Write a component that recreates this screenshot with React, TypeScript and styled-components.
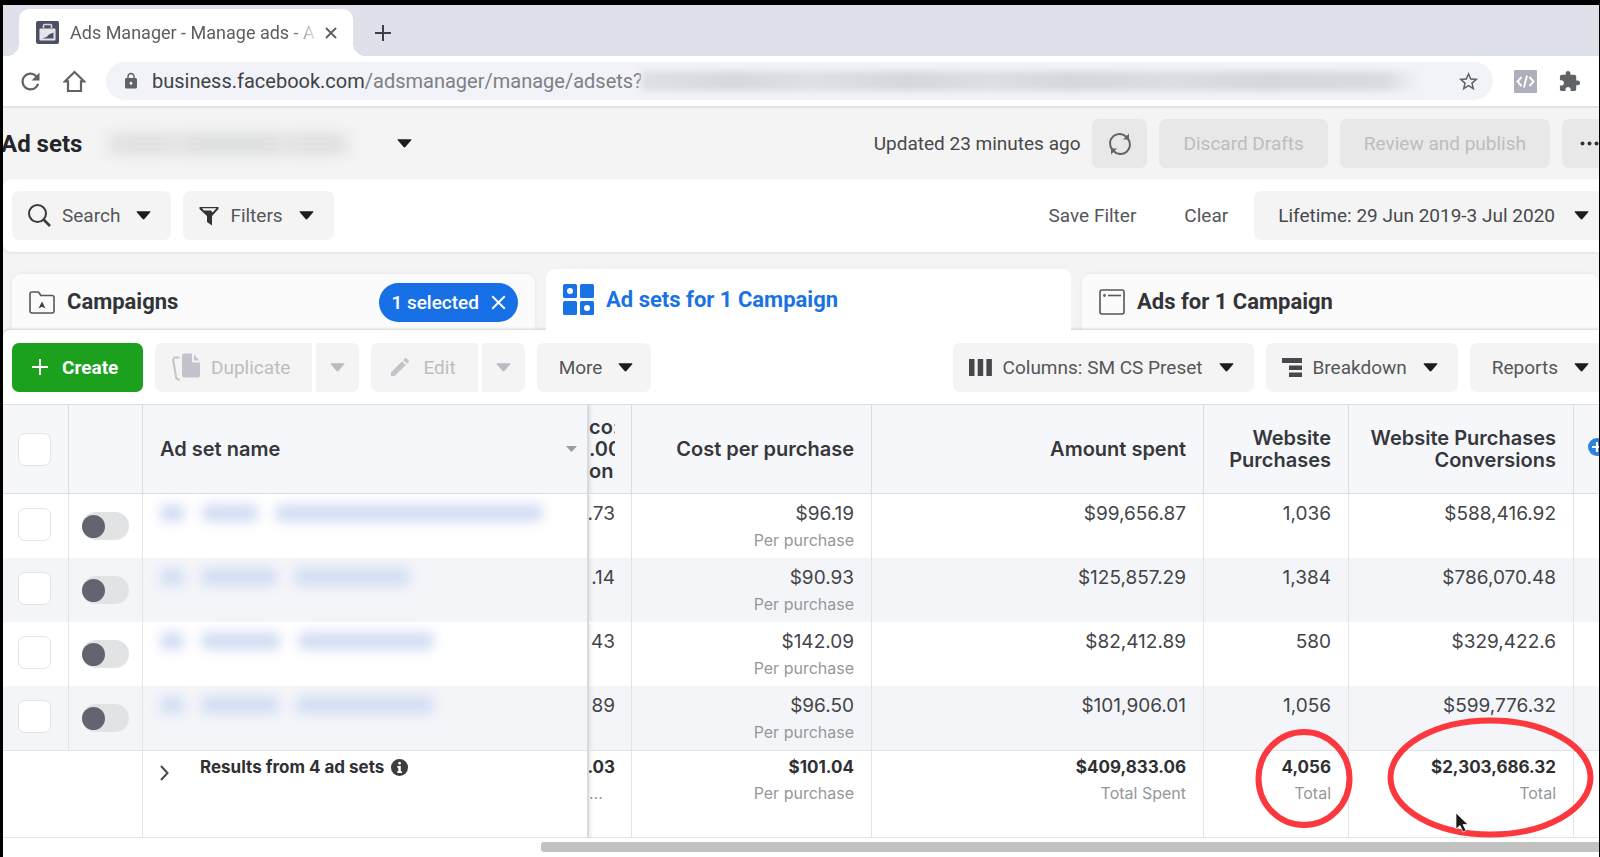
import React, { useState } from 'react';
import styled, { createGlobalStyle, css } from 'styled-components';
import { MdLock, MdStarBorder, MdExtension, MdRefresh, MdEdit } from 'react-icons/md';

const Global = createGlobalStyle`
  *, *::before, *::after { box-sizing: border-box; }
  body { margin: 0; background: #000; font-family: Roboto, "Liberation Sans", sans-serif; font-size: 19px; color: #4a4b4f; }
  button, input { font: inherit; color: inherit; margin: 0; }
  button { cursor: pointer; }
`;

const Page = styled.div`
  display: flex;
  flex-direction: column;
  min-height: 100vh;
  overflow: hidden;
  background: #f4f4f4;
  border: solid #000;
  border-width: 5px 1px 0 3px;
`;

/* Browser chrome */
const TabStrip = styled.div`
  display: flex;
  align-items: flex-end;
  height: 51px;
  padding-left: 16px;
  background: #dee1e9;
`;
const BrowserTab = styled.div`
  position: relative;
  display: flex;
  align-items: center;
  gap: 11px;
  width: 334px;
  height: 47px;
  padding: 0 16px 0 17px;
  background: #fff;
  border-radius: 10px 10px 0 0;
  &::before, &::after {
    content: '';
    position: absolute;
    bottom: 0;
    width: 12px;
    height: 12px;
  }
  &::before { left: -12px; background: radial-gradient(circle at 0 0, transparent 12px, #fff 12px); }
  &::after { right: -12px; background: radial-gradient(circle at 100% 0, transparent 12px, #fff 12px); }
`;
const TabTitle = styled.span`
  flex: 1;
  overflow: hidden;
  white-space: nowrap;
  font-size: 18px;
  line-height: 24px;
  color: #5c5e62;
  mask-image: linear-gradient(90deg, #000 220px, transparent 250px);
`;
const PlainButton = styled.button`
  display: flex;
  padding: 0;
  border: 0;
  background: none;
  color: #5f6368;
`;
const NewTab = styled(PlainButton)`
  align-items: center;
  height: 46px;
  margin-left: 22px;
  color: #3c3f43;
`;
const UrlRow = styled.div`
  display: flex;
  align-items: center;
  height: 52px;
  padding-left: 14px;
  background: #fff;
  border-bottom: 2px solid #e2e3e5;
`;
const HomeButton = styled(PlainButton)`
  margin: 0 20px 0 19px;
`;
const AddressBar = styled.label`
  display: flex;
  flex: 1;
  align-items: center;
  height: 38px;
  padding: 0 13px 0 16px;
  border-radius: 19px;
  background: #f2f3f8;
  font-size: 20px;
  color: #404347;
`;
const Domain = styled.span`
  margin-left: 12px;
`;
const PathInput = styled.input`
  width: 276px;
  padding: 0;
  border: 0;
  outline: 0;
  background: none;
  color: #7d7f84;
`;
const HiddenQuery = styled.span`
  flex: 1;
  height: 20px;
  margin-right: 36px;
  background: linear-gradient(90deg, #dfe0e4, #d6d8dc 12%, #dfe0e4 22%, #d5d7db 34%, #dcdee2 45%, #d5d7db 55%, #dcdde1 68%, #d5d7db 80%, #d9dbdf 95%, #f2f3f8);
  filter: blur(3px);
`;
const Extensions = styled.div`
  display: flex;
  align-items: center;
  gap: 21px;
  padding: 0 18px 0 21px;
`;

/* Shared controls */
type BtnProps = { $muted?: boolean; $tone?: 'light' | 'grey'; $edge?: boolean };
const Button = styled.button<BtnProps>`
  display: flex;
  flex: none;
  align-items: center;
  gap: 11px;
  height: 49px;
  padding: 0 20px 0 16px;
  border: 0;
  border-radius: 7px;
  background: ${p => (p.$tone === 'grey' ? '#e8e8e8' : '#f4f4f4')};
  color: ${p => (p.$muted ? '#bcbdc1' : '#55565a')};
  white-space: nowrap;
  ${p => p.$edge && css`
    padding-left: 22px;
    padding-right: 10px;
    border-radius: 7px 0 0 7px;
  `}
`;
const TextButton = styled(Button)`
  padding: 0 24px;
`;
const MoreButton = styled(Button)`
  padding: 0 18px 0 22px;
`;
const DateButton = styled(Button)`
  gap: 14px;
  padding-left: 24px;
  color: #47484c;
`;
const IconButton = styled(Button)`
  width: 55px;
  padding: 0;
  justify-content: center;
`;
const OverflowButton = styled(Button)`
  width: 37px;
  padding: 0 0 0 18px;
  border-radius: 7px 0 0 7px;
`;
const LinkButton = styled(Button)`
  background: none;
  padding: 0 22px;
`;
const CreateButton = styled(Button)`
  gap: 14px;
  width: 131px;
  padding: 0 0 0 20px;
  background: #1ba11d;
  color: #fff;
  font-weight: 700;
`;
const SplitGroup = styled.div`
  display: flex;
  gap: 4px;
`;
const SplitMain = styled(Button)`
  padding: 0 22px 0 17px;
  border-radius: 7px 0 0 7px;
`;
const SplitCaret = styled(Button)`
  width: 43px;
  padding: 0;
  justify-content: center;
  border-radius: 0 7px 7px 0;
`;
const CaretSvg = styled.svg<{ $muted?: boolean }>`
  flex: none;
  margin-left: 5px;
  color: ${p => (p.$muted ? '#b9bac2' : '#1c1c1e')};
  ${SplitCaret} & { margin-left: 0; }
`;

/* Account header */
const Header = styled.header`
  display: flex;
  align-items: center;
  gap: 12px;
  height: 71px;
`;
const Title = styled.h1`
  margin: 0 0 0 -2px;
  font-size: 24px;
  line-height: 32px;
  font-weight: 700;
  color: #25262a;
`;
const HiddenAccount = styled.span`
  width: 240px;
  height: 22px;
  margin: 0 32px 0 14px;
  border-radius: 8px;
  background: linear-gradient(90deg, #dfe0e1 0 24%, #e4e4e5 28%, #dddedf 36% 66%, #e3e3e4 74%, #dedfe0 82%);
  filter: blur(7px);
`;
const Updated = styled.span`
  margin-left: auto;
  color: #47484c;
`;

const FilterBar = styled.section`
  display: flex;
  align-items: center;
  gap: 12px;
  height: 73px;
  padding-left: 9px;
  background: #fff;
  border-radius: 8px 0 0 8px;
  box-shadow: 0 1px 3px rgba(0, 0, 0, 0.1);
`;
const RightGroup = styled.div<{ $gap?: number }>`
  display: flex;
  gap: ${p => p.$gap ?? 12}px;
  margin-left: auto;
`;

/* Level tabs */
const LevelTabs = styled.nav`
  display: grid;
  grid-template-columns: 523fr 525fr 517fr;
  align-items: end;
  gap: 11px;
  height: 78px;
  padding-left: 9px;
`;
const LevelTab = styled.div<{ $active?: boolean }>`
  position: relative;
  z-index: ${p => (p.$active ? 2 : 0)};
  display: flex;
  align-items: center;
  gap: 12px;
  height: ${p => (p.$active ? 61 : 56)}px;
  padding: 0 17px;
  border-radius: 9px 9px 0 0;
  background: ${p => (p.$active ? '#fff' : '#fbfbfb')};
  box-shadow: 0 0 5px rgba(0, 0, 0, ${p => (p.$active ? 0 : 0.06)});
`;
const LevelLink = styled.a<{ $active?: boolean }>`
  font-size: 22px;
  line-height: 28px;
  font-weight: 700;
  text-decoration: none;
  color: ${p => (p.$active ? '#1a73e3' : '#333438')};
`;
const SelectedPill = styled.button`
  display: flex;
  align-items: center;
  gap: 12px;
  height: 39px;
  margin-left: auto;
  padding: 0 12px;
  border: 0;
  border-radius: 20px;
  background: #1770e6;
  color: #fff;
  font-weight: 500;
`;

const Toolbar = styled.section`
  position: relative;
  z-index: 1;
  display: flex;
  align-items: center;
  gap: 12px;
  height: 74px;
  padding-left: 9px;
  background: #fff;
  border-radius: 7px 0 0 0;
  box-shadow: 0 -1px 3px rgba(0, 0, 0, 0.16);
`;

/* Data table */
const TableArea = styled.main`
  position: relative;
  z-index: 1;
  flex: 1;
  background: #fff;
  font-family: Inter, "Liberation Sans", sans-serif;
`;
const Table = styled.table`
  width: 100%;
  table-layout: fixed;
  border-collapse: separate;
  border-spacing: 0;
`;
const stickyEdge = css`
  position: relative;
  border-right: 2px solid #d9dade;
  box-shadow: 2px 0 3px rgba(0, 0, 0, 0.08);
  clip-path: inset(0 -6px 0 0);
  text-align: left;
`;
const Th = styled.th`
  height: 90px;
  padding: 0 17px;
  border: solid #dcdde1;
  border-width: 1px 1px 1px 0;
  background: #f6f7fb;
  font-size: 20px;
  line-height: 22px;
  font-weight: 600;
  text-align: right;
  color: #36373b;
  &:last-child { border-right: 0; }
`;
const CheckTh = styled(Th)`
  padding: 0 3px 0 0;
`;
const StickyTh = styled(Th)`
  ${stickyEdge}
`;
const HeadName = styled.div`
  display: flex;
  align-items: center;
  justify-content: space-between;
  margin-right: -7px;
`;
const Row = styled.tr<{ $striped?: boolean }>`
  background: ${p => (p.$striped ? '#f4f5f9' : '#fff')};
`;
const Td = styled.td`
  height: 64px;
  padding: 8px 17px 0;
  border-right: 1px solid #e3e4e7;
  vertical-align: top;
  text-align: right;
  white-space: nowrap;
  &:last-child { border-right: 0; }
`;
const ControlTd = styled(Td)`
  padding: 0 3px 3px 0;
  vertical-align: middle;
  text-align: center;
`;
const ToggleTd = styled(ControlTd)`
  padding: 0 0 1px;
`;
const StickyTd = styled(Td)`
  ${stickyEdge}
`;
const FootTd = styled(Td)`
  height: 88px;
  padding-top: 4px;
  border-top: 1px solid #e3e4e7;
  border-bottom: 1px solid #e3e4e7;
`;
const StickyFootTd = styled(FootTd)`
  ${stickyEdge}
`;
const Clip = styled.div<{ $end?: boolean }>`
  display: flex;
  justify-content: ${p => (p.$end ? 'flex-end' : 'flex-start')};
  width: 26px;
  margin-left: -17px;
  overflow: hidden;
  white-space: nowrap;
`;
const Value = styled.div<{ $total?: boolean }>`
  font-size: ${p => (p.$total ? 17 : 19)}px;
  line-height: 24px;
  font-weight: ${p => (p.$total ? 700 : 400)};
  color: ${p => (p.$total ? '#2f3034' : '#434448')};
`;
const Note = styled.div`
  font-size: 16px;
  line-height: 28px;
  color: #96979b;
`;
const CheckBox = styled.input`
  appearance: none;
  display: block;
  width: 33px;
  height: 33px;
  margin: 0 auto;
  border: 1px solid #e2e3e6;
  border-radius: 7px;
  background: #fff;
`;
const Toggle = styled.input`
  appearance: none;
  display: block;
  width: 47px;
  height: 28px;
  margin: 0 auto;
  padding: 3px 0;
  border-radius: 14px;
  background: #e2e3e5;
  &::before {
    content: '';
    display: block;
    width: 23px;
    height: 23px;
    border-radius: 50%;
    background: #62656f;
  }
`;
const HiddenName = styled.div`
  display: flex;
  gap: 17px;
  padding-top: 2px;
  filter: blur(6px);
`;
const HiddenWord = styled.span<{ $w: number }>`
  width: ${p => p.$w}px;
  height: 18px;
  border-radius: 6px;
  background: #d3ddf3;
`;
const Results = styled.div`
  display: flex;
  align-items: flex-start;
  font-size: 17px;
  line-height: 24px;
  font-weight: 700;
  color: #2f3034;
`;
const ResultsText = styled.span`
  display: flex;
  align-items: center;
  gap: 7px;
`;
const ExpandButton = styled(PlainButton)`
  margin: 10px 31px 0 0;
  color: #47484c;
`;
const AddButton = styled(PlainButton)`
  margin: 0 0 4px -3px;
`;
const ScrollTrack = styled.div`
  display: flex;
  padding-top: 4px;
`;
const ScrollThumb = styled.div`
  flex: 1;
  height: 10px;
  margin-left: 538px;
  border-radius: 3px 0 0 3px;
  background: #c2c2c2;
`;

/* Hand-drawn marks lying over the totals */
const Mark = styled.svg<{ $right: number; $top: number }>`
  position: absolute;
  right: ${p => p.$right}px;
  top: ${p => p.$top}px;
  pointer-events: none;
`;

const Caret = ({ muted }: { muted?: boolean }) => (
  <CaretSvg $muted={muted} width="15" height="9" viewBox="0 0 15 9" aria-hidden="true">
    <path d="M.6 1Q.3.4 1 .3H14q.7.1.4.7L8.4 8.1q-.9.9-1.8 0Z" fill="currentColor" />
  </CaretSvg>
);
const AdsFavicon = () => (
  <svg width="23" height="23" viewBox="0 0 23 23">
    <rect width="23" height="23" rx="2" fill="#4d5064" />
    <path d="M7.5 7V4.5q0-1 1-1h6q1 0 1 1V7" fill="none" stroke="#d3d6e2" strokeWidth="1.6" />
    <rect x="3.5" y="7.5" width="16" height="12" rx="1" fill="#e3e5ee" />
    <path d="M6 17.500l4.500-1.500 2.500-2.500 4.500-2V17.500Z" fill="#4d5064" />
  </svg>
);
const Cross = ({ size, width }: { size: number; width: number }) => (
  <svg width={size} height={size} viewBox="0 0 12 12"><path d="M1 1 11 11M11 1 1 11" stroke="currentColor" strokeWidth={width} /></svg>
);
const Plus = ({ size, width }: { size: number; width: number }) => (
  <svg width={size} height={size} viewBox="0 0 16 16"><path d="M8 0V16M0 8H16" stroke="currentColor" strokeWidth={width} /></svg>
);
const HomeIcon = () => (
  <svg width="23" height="23" viewBox="0 0 23 23">
    <path d="M11.500 2 21 11.300H18V21H5V11.300H2Z" fill="none" stroke="currentColor" strokeWidth="2.200" />
  </svg>
);
const CodeIcon = () => (
  <svg width="23" height="23" viewBox="0 0 23 23">
    <rect width="23" height="23" rx="1" fill="#adafba" />
    <path d="M7.500 7 3.500 11.500 7.500 16M15.500 7 19.500 11.500 15.500 16M13 5.500 10 17.500" fill="none" stroke="#fff" strokeWidth="1.900" />
  </svg>
);
const SyncIcon = () => (
  <svg width="24" height="24" viewBox="0 0 24 24" fill="none" stroke="#626368" strokeWidth="2">
    <path d="M4.200 17.500A9.500 9.500 0 0 1 18.500 5" />
    <path d="M19.800 6.500A9.500 9.500 0 0 1 5.500 19" />
    <path d="M21 1.500v6h-6ZM3 22.500v-6h6Z" fill="#626368" stroke="none" />
  </svg>
);
const DotsIcon = () => (
  <svg width="19" height="5" viewBox="0 0 19 5" fill="#333"><circle cx="2.500" cy="2.500" r="2" /><circle cx="9.500" cy="2.500" r="2" /><circle cx="16.500" cy="2.500" r="2" /></svg>
);
const SearchIcon = () => (
  <svg width="23" height="23" viewBox="0 0 23 23" fill="none" stroke="#3a3b3f">
    <circle cx="9.500" cy="9.500" r="8.500" strokeWidth="2" /><path d="m15.500 15.500 6.500 6.500" strokeWidth="2.600" />
  </svg>
);
const FunnelIcon = () => (
  <svg width="20" height="20" viewBox="0 0 20 20">
    <path d="M.5 1H19.500V3L13 10V19.500L8 16V10L.5 3Z" fill="#333438" />
    <path d="M3 2.300H17.500L13.500 6.500 12 4.500H4.800Z" fill="#f4f4f4" />
  </svg>
);
const FolderIcon = () => (
  <svg width="26" height="23" viewBox="0 0 26 23">
    <path d="M1 20V3q0-2 2-2h5.500q1.200 0 1.800 1l1.400 2.500H23q2 0 2 2V20q0 2-2 2H3q-2 0-2-2Z" fill="none" stroke="#56575b" strokeWidth="1.600" />
    <path d="M13 10.500 16.500 17.500 13 15.700 9.500 17.500Z" fill="#3c3d41" />
  </svg>
);
const GridIcon = () => (
  <svg width="31" height="31" viewBox="0 0 31 31" fill="#1a73e3">
    <rect width="14" height="14" rx="1.500" /><rect x="17" width="14" height="14" rx="1.500" />
    <rect y="17" width="14" height="14" rx="1.500" /><rect x="17" y="17" width="14" height="14" rx="1.500" />
    <circle cx="7" cy="7" r="3" fill="#fff" /><circle cx="24" cy="24" r="3" fill="#fff" />
  </svg>
);
const AdIcon = () => (
  <svg width="26" height="26" viewBox="0 0 26 26" fill="none" stroke="#56575b" strokeWidth="1.600">
    <rect x="1" y="1" width="24" height="24" rx="2" /><path d="M9 6.500H22" /><circle cx="5.500" cy="6.500" r=".6" />
  </svg>
);
const DuplicateIcon = () => (
  <svg width="28" height="28" viewBox="0 0 28 28">
    <path d="M7.500 4.500H3Q1 5 1.300 7.500L4 24q.5 2.500 4 2.800" fill="none" stroke="#c3c3cb" strokeWidth="2" />
    <path d="M12 .5H20V8q0 1.500 1.500 1.500H28V22q0 2.500-2.500 2.500H12q-2 0-2-2V2.500q0-2 2-2Z" fill="#c3c3cb" />
    <path d="M22 1.500 27 7.500H22Z" fill="#c3c3cb" />
  </svg>
);
const ColumnsIcon = () => (
  <svg width="23" height="17" viewBox="0 0 23 17" fill="#47484c"><path d="M0 0H5.500V17H0ZM8.700 0H14.200V17H8.700ZM17.400 0H22.900V17H17.400Z" /></svg>
);
const BreakdownIcon = () => (
  <svg width="20" height="19" viewBox="0 0 20 19" fill="#47484c"><path d="M0 0H20V5H0ZM7 7.500H20V12H7ZM7 14.500H20V19H7Z" /></svg>
);
const InfoIcon = () => (
  <svg width="17" height="17" viewBox="0 0 17 17"><circle cx="8.500" cy="8.500" r="8.500" fill="#3c3d41" /><path d="M8.500 2.800a1.400 1.400 0 1 0 .1 0ZM6.300 7H9.800V12.300H11V14H6.300V12.300H7.300V8.700H6.300Z" fill="#fff" /></svg>
);
const AddIcon = () => (
  <svg width="18" height="18" viewBox="0 0 18 18"><circle cx="9" cy="9" r="9" fill="#2d82de" /><path d="M9 4V14M4 9H14" stroke="#fff" strokeWidth="2.200" /></svg>
);

const rows = [
  { clip: '.73', cost: '$96.19', spent: '$99,656.87', bought: '1,036', conv: '$588,416.92', words: [25, 56, 268] },
  { clip: '.14', cost: '$90.93', spent: '$125,857.29', bought: '1,384', conv: '$786,070.48', words: [24, 76, 116] },
  { clip: '43', cost: '$142.09', spent: '$82,412.89', bought: '580', conv: '$329,422.6', words: [24, 80, 136] },
  { clip: '89', cost: '$96.50', spent: '$101,906.01', bought: '1,056', conv: '$599,776.32', words: [24, 78, 138] },
];

export default function App() {
  const [path, setPath] = useState('/adsmanager/manage/adsets?');
  return (
    <>
      <Global />
      <Page>
        <TabStrip>
          <BrowserTab>
            <AdsFavicon />
            <TabTitle>Ads Manager - Manage ads - A</TabTitle>
            <PlainButton aria-label="Close tab"><Cross size={12} width={2} /></PlainButton>
          </BrowserTab>
          <NewTab aria-label="New tab"><Plus size={16} width={2} /></NewTab>
        </TabStrip>
        <UrlRow>
          <PlainButton aria-label="Reload"><MdRefresh size={27} /></PlainButton>
          <HomeButton aria-label="Home"><HomeIcon /></HomeButton>
          <AddressBar>
            <MdLock size={18} color="#5f6368" />
            <Domain>business.facebook.com</Domain>
            <PathInput aria-label="Address" value={path} onChange={e => setPath(e.target.value)} />
            <HiddenQuery />
            <PlainButton aria-label="Bookmark"><MdStarBorder size={23} /></PlainButton>
          </AddressBar>
          <Extensions>
            <PlainButton aria-label="Code extension"><CodeIcon /></PlainButton>
            <PlainButton aria-label="Extensions"><MdExtension size={23} /></PlainButton>
          </Extensions>
        </UrlRow>

        <Header>
          <Title>Ad sets</Title>
          <HiddenAccount />
          <PlainButton aria-label="Choose account"><Caret /></PlainButton>
          <Updated>Updated 23 minutes ago</Updated>
          <IconButton $tone="grey" aria-label="Refresh"><SyncIcon /></IconButton>
          <TextButton $tone="grey" $muted>Discard Drafts</TextButton>
          <TextButton $tone="grey" $muted>Review and publish</TextButton>
          <OverflowButton $tone="grey" aria-label="More options"><DotsIcon /></OverflowButton>
        </Header>

        <FilterBar>
          <Button><SearchIcon />Search<Caret /></Button>
          <Button><FunnelIcon />Filters<Caret /></Button>
          <RightGroup $gap={4}>
            <LinkButton>Save Filter</LinkButton>
            <LinkButton>Clear</LinkButton>
            <DateButton $edge>Lifetime: 29 Jun 2019-3 Jul 2020<Caret /></DateButton>
          </RightGroup>
        </FilterBar>

        <LevelTabs>
          <LevelTab>
            <FolderIcon />
            <LevelLink href="#campaigns">Campaigns</LevelLink>
            <SelectedPill>1 selected<Cross size={15} width={1.5} /></SelectedPill>
          </LevelTab>
          <LevelTab $active>
            <GridIcon />
            <LevelLink href="#adsets" $active>Ad sets for 1 Campaign</LevelLink>
          </LevelTab>
          <LevelTab>
            <AdIcon />
            <LevelLink href="#ads">Ads for 1 Campaign</LevelLink>
          </LevelTab>
        </LevelTabs>

        <Toolbar>
          <CreateButton><Plus size={16} width={2} />Create</CreateButton>
          <SplitGroup>
            <SplitMain $muted><DuplicateIcon />Duplicate</SplitMain>
            <SplitCaret aria-label="Duplicate options"><Caret muted /></SplitCaret>
          </SplitGroup>
          <SplitGroup>
            <SplitMain $muted><MdEdit size={24} color="#c3c3cb" />Edit</SplitMain>
            <SplitCaret aria-label="Edit options"><Caret muted /></SplitCaret>
          </SplitGroup>
          <MoreButton>More<Caret /></MoreButton>
          <RightGroup>
            <Button><ColumnsIcon />Columns: SM CS Preset<Caret /></Button>
            <Button><BreakdownIcon />Breakdown<Caret /></Button>
            <Button $edge>Reports<Caret /></Button>
          </RightGroup>
        </Toolbar>

        <TableArea>
          <Table>
            <colgroup>
              <col width="66" /><col width="74" /><col width="446" /><col width="43" /><col width="240" />
              <col /><col width="145" /><col width="225" /><col width="25" />
            </colgroup>
            <thead>
              <tr>
                <CheckTh><CheckBox type="checkbox" aria-label="Select all" /></CheckTh>
                <Th />
                <StickyTh>
                  <HeadName>
                    Ad set name
                    <svg width="11" height="6" viewBox="0 0 11 6"><path d="M0 0H11L5.500 6Z" fill="#9c9da1" /></svg>
                  </HeadName>
                </StickyTh>
                <Th><Clip>co:</Clip><Clip>.00</Clip><Clip>on:</Clip></Th>
                <Th>Cost per purchase</Th>
                <Th>Amount spent</Th>
                <Th>Website Purchases</Th>
                <Th>Website Purchases Conversions</Th>
                <Th><AddButton aria-label="Add column"><AddIcon /></AddButton></Th>
              </tr>
            </thead>
            <tbody>
              {rows.map((r, i) => (
                <Row key={r.conv} $striped={i % 2 === 1}>
                  <ControlTd><CheckBox type="checkbox" aria-label={`Select ad set ${i + 1}`} /></ControlTd>
                  <ToggleTd><Toggle type="checkbox" role="switch" aria-label={`Ad set ${i + 1} on or off`} /></ToggleTd>
                  <StickyTd>
                    <HiddenName>{r.words.map((w, j) => <HiddenWord key={j} $w={w} />)}</HiddenName>
                  </StickyTd>
                  <Td><Clip $end><Value>{r.clip}</Value></Clip></Td>
                  <Td><Value>{r.cost}</Value><Note>Per purchase</Note></Td>
                  <Td><Value>{r.spent}</Value></Td>
                  <Td><Value>{r.bought}</Value></Td>
                  <Td><Value>{r.conv}</Value></Td>
                  <Td />
                </Row>
              ))}
            </tbody>
            <tfoot>
              <Row>
                <FootTd colSpan={2} />
                <StickyFootTd>
                  <Results>
                    <ExpandButton aria-label="Expand results">
                      <svg width="9" height="16" viewBox="0 0 9 16"><path d="m1 1 6.500 7L1 15" fill="none" stroke="currentColor" strokeWidth="2" /></svg>
                    </ExpandButton>
                    <ResultsText>Results from 4 ad sets<InfoIcon /></ResultsText>
                  </Results>
                </StickyFootTd>
                <FootTd><Clip $end><Value $total>.03</Value></Clip><Clip><Note>...</Note></Clip></FootTd>
                <FootTd><Value $total>$101.04</Value><Note>Per purchase</Note></FootTd>
                <FootTd><Value $total>$409,833.06</Value><Note>Total Spent</Note></FootTd>
                <FootTd><Value $total>4,056</Value><Note>Total</Note></FootTd>
                <FootTd><Value $total>$2,303,686.32</Value><Note>Total</Note></FootTd>
                <FootTd />
              </Row>
            </tfoot>
          </Table>
          <ScrollTrack><ScrollThumb /></ScrollTrack>
          <Mark $right={246} $top={325} width="98" height="99" viewBox="0 0 98 99">
            <ellipse cx="49" cy="49.500" rx="45.500" ry="46.500" fill="none" stroke="#fb383e" strokeWidth="6" />
          </Mark>
          <Mark $right={5} $top={313} width="207" height="121" viewBox="0 0 207 121">
            <ellipse cx="103.500" cy="60.500" rx="100" ry="57" fill="none" stroke="#fb383e" strokeWidth="6" />
          </Mark>
          <Mark $right={129} $top={409} width="15" height="20" viewBox="0 0 15 20">
            <path d="M1 0V16L5 12.500 8 19 11 17.500 8 11.500H13Z" fill="#1a1a1a" stroke="#fff" strokeWidth=".7" />
          </Mark>
        </TableArea>
      </Page>
    </>
  );
}
